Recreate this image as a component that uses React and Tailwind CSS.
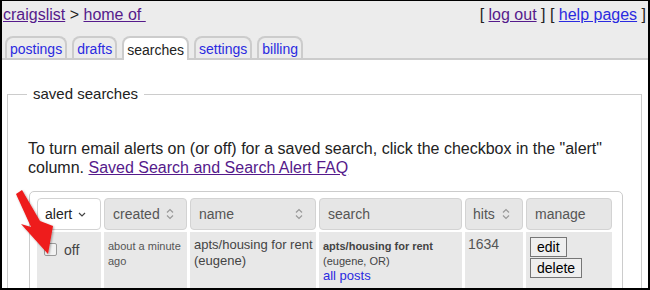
const SortIcon = () => (
  <svg width="8" height="12" viewBox="0 0 8 12" className="shrink-0">
    <path d="M1 4.5 L4 1.5 L7 4.5 M1 7.5 L4 10.5 L7 7.5" fill="none" stroke="#999" strokeWidth="1.2" />
  </svg>
);

export default function App() {
  const tabs = ['postings', 'drafts', 'searches', 'settings', 'billing'];

  return (
    <div
      className="relative w-[650px] h-[290px] overflow-hidden bg-white border-t border-l-2 border-r-2 border-b-2 border-black text-[#222]"
      style={{ fontFamily: '"Liberation Sans", Arial, sans-serif' }}
    >
      {/* header */}
      <div className="h-[59px] bg-[#ececec] border-b-2 border-[#cccccc] flex flex-col">
        <div className="flex justify-between pt-[5px] pl-[1px] pr-[2px] text-[16px] leading-[18px]">
          <div>
            <a className="text-[#551a8b] underline">craigslist</a> &gt;{' '}
            <a className="text-[#551a8b] underline">home of&nbsp;</a>
          </div>
          <div>
            [ <a className="text-[#551a8b] underline">log out</a> ] [{' '}
            <a className="text-[#2a2ae0] underline">help pages</a> ]
          </div>
        </div>
        <div className="mt-auto flex items-end gap-[5px] pl-[3px] mb-[-2px]">
          {tabs.map((t) =>
            t === 'searches' ? (
              <div
                key={t}
                className="h-[24px] px-[3px] border-2 border-b-0 border-[#cccccc] rounded-t-[8px] bg-white text-[14px] leading-[20px] pt-[2px] text-[#222]"
              >
                {t}
              </div>
            ) : (
              <div
                key={t}
                className="h-[22px] mb-[2px] px-[3px] border-2 border-b-0 border-[#cccccc] rounded-t-[8px] bg-[#ececec] text-[14px] leading-[20px] pt-[1px] text-[#2a2ae0]"
              >
                {t}
              </div>
            )
          )}
        </div>
      </div>

      {/* saved searches */}
      <fieldset className="ml-[5px] mt-[25px] w-[635px] h-[300px] border border-[#cccccc]">
        <legend className="ml-[19px] px-[6px] text-[15px] leading-[18px] text-[#222]">saved searches</legend>
        <p className="mt-[36px] pl-[20px] text-[16px] leading-[19px] text-[#222]">
          To turn email alerts on (or off) for a saved search, click the checkbox in the "alert" column.{' '}
          <a className="text-[#551a8b] underline">Saved Search and Search Alert FAQ</a>
        </p>

        <div className="ml-[21px] mt-[14px] w-[594px] border border-[#cccccc] rounded-[5px] pl-[7px] pt-[6px] h-[120px]">
          <div className="grid grid-cols-[64px_83px_126px_143px_58px_86px] gap-x-[3px] gap-y-[2px] text-[14px] leading-[16px]">
            {/* header row */}
            <div className="h-[32px] rounded-[4px] border border-[#d3d3d3] bg-white flex items-center pl-[7px] gap-[6px] text-[#222]">
              alert
              <svg width="8" height="5" viewBox="0 0 8 5">
                <path d="M1 1 L4 4 L7 1" fill="none" stroke="#444" strokeWidth="1.2" />
              </svg>
            </div>
            <div className="h-[32px] rounded-[4px] border border-[#d3d3d3] bg-[#e6e6e6] flex items-center pl-[8px] gap-[6px] text-[#555]">
              created
              <SortIcon />
            </div>
            <div className="h-[32px] rounded-[4px] border border-[#d3d3d3] bg-[#e6e6e6] flex items-center justify-between pl-[8px] pr-[12px] text-[#555]">
              name
              <SortIcon />
            </div>
            <div className="h-[32px] rounded-[4px] border border-[#d3d3d3] bg-[#e6e6e6] flex items-center pl-[8px] text-[#555]">
              search
            </div>
            <div className="h-[32px] rounded-[4px] border border-[#d3d3d3] bg-[#e6e6e6] flex items-center pl-[7px] gap-[7px] text-[#555]">
              hits
              <SortIcon />
            </div>
            <div className="h-[32px] rounded-[4px] border border-[#d3d3d3] bg-[#e6e6e6] flex items-center pl-[8px] text-[#555]">
              manage
            </div>

            {/* data row */}
            <div className="h-[70px] bg-[#e8e8e8] flex items-start pl-[7px] pt-[10px] gap-[7px]">
              <span className="mt-[1px] w-[13px] h-[13px] rounded-[2px] border border-[#9a9a9a] bg-[#f2f2f2]" />
              <span className="text-[#444]">off</span>
            </div>
            <div className="h-[70px] bg-[#e8e8e8] pl-[4px] pt-[7px] text-[11px] leading-[15px] text-[#555]">
              about a minute
              <br />
              ago
            </div>
            <div className="h-[70px] bg-[#e8e8e8] pl-[4px] pt-[5px] text-[13px] leading-[16px] text-[#444] whitespace-nowrap">
              apts/housing for rent
              <br />
              (eugene)
            </div>
            <div className="h-[70px] bg-[#e8e8e8] pl-[4px] pt-[7px] text-[11px] leading-[15px] text-[#444]">
              <div className="font-bold">apts/housing for rent</div>
              <div>(eugene, OR)</div>
              <a className="text-[13px] leading-[14px] text-[#2a2ae0]">all posts</a>
            </div>
            <div className="h-[70px] bg-[#e8e8e8] pl-[3px] pt-[4px] text-[#555]">1634</div>
            <div className="h-[70px] bg-[#e8e8e8] pl-[4px] pt-[5px] flex flex-col items-start gap-[1px]">
              <button className="h-[20px] px-[6px] border border-[#767676] bg-[#efefef] text-[14px] leading-[16px] text-black">
                edit
              </button>
              <button className="h-[20px] px-[6px] border border-[#767676] bg-[#efefef] text-[14px] leading-[16px] text-black">
                delete
              </button>
            </div>
          </div>
        </div>
      </fieldset>

      {/* red annotation arrow */}
      <svg className="absolute left-0 top-0 pointer-events-none" width="650" height="290" viewBox="0 0 650 290">
        <defs>
          <filter id="sh" x="-50%" y="-50%" width="200%" height="200%">
            <feDropShadow dx="1" dy="1" stdDeviation="1" floodColor="#000" floodOpacity="0.35" />
          </filter>
        </defs>
        <polygon
          points="14,193 20,189 38,220 51,225 46,253 19,223 29,226"
          fill="#ee1b1b"
          filter="url(#sh)"
        />
      </svg>
    </div>
  );
}
